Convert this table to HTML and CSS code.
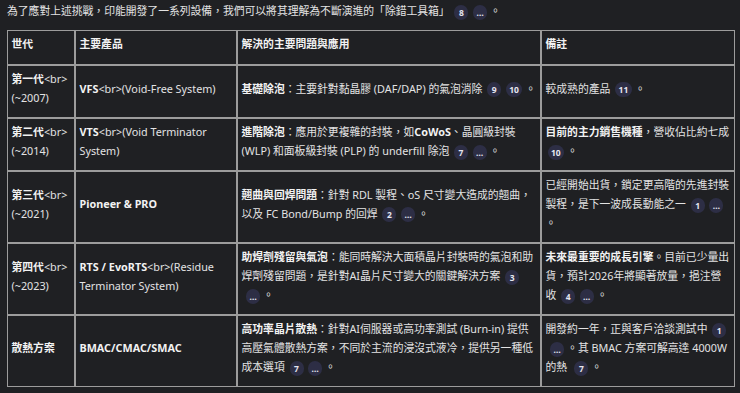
FILE: index.html
```html
<!DOCTYPE html>
<html lang="zh-Hant">
<head>
<meta charset="utf-8">
<title>印能設備</title>
<link rel="stylesheet" href="styles.css">
</head>
<body>
<p class="intro">為了應對上述挑戰，印能開發了一系列設備，我們可以將其理解為不斷演進的「除錯工具箱」 <span class="badge">8</span><span class="badge">…</span> 。</p>
<table class="gen-table">
  <colgroup>
    <col class="c1"><col class="c2"><col class="c3"><col class="c4">
  </colgroup>
  <thead>
    <tr>
      <th>世代</th>
      <th>主要產品</th>
      <th>解決的主要問題與應用</th>
      <th>備註</th>
    </tr>
  </thead>
  <tbody>
    <tr>
      <td><b>第一代</b>&lt;br&gt; (~2007)</td>
      <td><b>VFS</b>&lt;br&gt;(Void-Free System)</td>
      <td><b>基礎除泡</b>：主要針對黏晶膠 (DAF/DAP) 的氣泡消除 <span class="badge">9</span><span class="badge">10</span> 。</td>
      <td>較成熟的產品 <span class="badge">11</span> 。</td>
    </tr>
    <tr>
      <td><b>第二代</b>&lt;br&gt; (~2014)</td>
      <td><b>VTS</b>&lt;br&gt;(Void Terminator System)</td>
      <td><b>進階除泡</b>：應用於更複雜的封裝，如<b>CoWoS</b>、晶圓級封裝 (WLP) 和面板級封裝 (PLP) 的 underfill 除泡 <span class="badge">7</span><span class="badge">…</span> 。</td>
      <td><b>目前的主力銷售機種</b>，營收佔比約七成 <span class="badge">10</span> 。</td>
    </tr>
    <tr>
      <td><b>第三代</b>&lt;br&gt; (~2021)</td>
      <td><b>Pioneer &amp; PRO</b></td>
      <td><b>翹曲與回焊問題</b>：針對 RDL 製程、oS 尺寸變大造成的翹曲，以及 FC Bond/Bump 的回焊 <span class="badge">2</span><span class="badge">…</span> 。</td>
      <td>已經開始出貨，鎖定更高階的先進封裝製程，是下一波成長動能之一 <span class="badge">1</span><span class="badge">…</span> 。</td>
    </tr>
    <tr>
      <td><b>第四代</b>&lt;br&gt; (~2023)</td>
      <td><b>RTS / EvoRTS</b>&lt;br&gt;(Residue Terminator System)</td>
      <td><b>助焊劑殘留與氣泡</b>：能同時解決大面積晶片封裝時的氣泡和助焊劑殘留問題，是針對AI晶片尺寸變大的關鍵解決方案 <span class="badge">3</span><span class="badge">…</span> 。</td>
      <td><b>未來最重要的成長引擎</b>。目前已少量出貨，預計2026年將顯著放量，挹注營收 <span class="badge">4</span><span class="badge">…</span> 。</td>
    </tr>
    <tr>
      <td><b>散熱方案</b></td>
      <td><b>BMAC/CMAC/SMAC</b></td>
      <td><b>高功率晶片散熱</b>：針對AI伺服器或高功率測試 (Burn-in) 提供高壓氣體散熱方案，不同於主流的浸沒式液冷，提供另一種低成本選項 <span class="badge">7</span><span class="badge">…</span> 。</td>
      <td>開發約一年，正與客戶洽談測試中 <span class="badge">1</span><span class="badge">…</span> 。其 BMAC 方案可解高達 4000W 的熱 <span class="badge">7</span> 。</td>
    </tr>
  </tbody>
</table>
</body>
</html>
```
FILE: styles.css
```css
html, body {
  background: #1f2023;
}
body {
  margin: 0;
  padding: 1px 5px 0 7px;
  font-family: "Noto Sans", "Noto Sans CJK TC", sans-serif;
  font-size: 10.8px;
  line-height: 19px;
  color: #e3e3e3;
}
.intro {
  margin: 0 0 10px 0;
}
b {
  font-weight: 700;
  color: #f2f2f2;
}
.badge {
  display: inline-block;
  box-sizing: border-box;
  min-width: 14px;
  height: 15px;
  padding: 0 3.5px;
  margin: 0 0 0 2px;
  border-radius: 8px;
  background: #2d2e45;
  color: #e6e6f0;
  font-size: 8.5px;
  font-weight: 700;
  line-height: 15px;
  text-align: center;
  vertical-align: middle;
}
.badge + .badge {
  margin-left: 4.5px;
}
.gen-table {
  table-layout: fixed;
  width: 728px;
  border-collapse: separate;
  border-spacing: 0;
}
.c1 { width: 68px; }
.c2 { width: 162px; }
.c3 { width: 304px; }
.c4 { width: 194px; }
.gen-table th,
.gen-table td {
  border: 1px solid #9c9c9c;
  padding: 3px 3px 10px 3.5px;
  text-align: left;
  vertical-align: middle;
}
.gen-table th {
  font-weight: 700;
  color: #f2f2f2;
  padding-bottom: 11px;
}
```
